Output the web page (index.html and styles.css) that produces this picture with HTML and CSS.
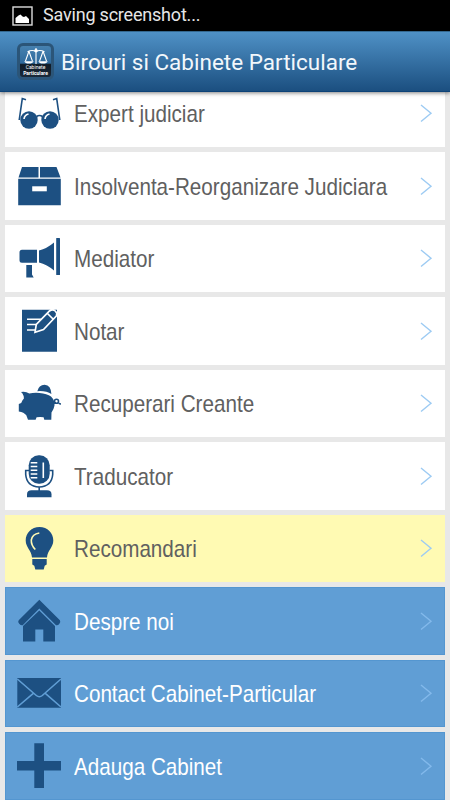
FILE: index.html
```html
<!DOCTYPE html>
<html lang="ro">
	<head>
		<meta charset="utf-8">
		<title>Birouri si Cabinete Particulare</title>
		<link rel="stylesheet" href="styles.css">
	</head>
	<body>
		<div class="status">
			<svg class="status-icon" viewBox="0 0 21 20">
				<rect x="1" y="1" width="19" height="18" fill="none" stroke="#ddd" stroke-width="1.4"/>
				<path d="M3.500 17v-5l3-2.500 2-1 2 2 1.500.5 2-1 3 3v4z" fill="#fff"/>
			</svg>
			<span class="status-text">Saving screenshot...</span>
		</div>
		<header class="bar">
			<div class="logo">
				<svg class="scales" viewBox="0 0 26 17" fill="none" stroke="#fff" stroke-width="1.200">
					<path d="M13 0v17M4 4q4.500-2.500 9-.5 4.500-2 9 .5M5.500 3.500L1.800 14M5.500 3.500L9.200 14M20.500 3.500L16.800 14M20.500 3.500L24.200 14"/>
					<path d="M.5 14h10q-1 2.500-5 2.500t-5-2.500zM15.500 14h10q-1 2.500-5 2.500t-5-2.500z" fill="#fff" stroke="none"/>
					<circle cx="13" cy="3" r="1.900" fill="#fff" stroke="none"/>
				</svg>
				<div class="logo-text">Cabinete<br><b>Particulare</b></div>
			</div>
			<h1 class="title">Birouri si Cabinete Particulare</h1>
		</header>
		<ul class="menu">
			<li class="item">
				<svg class="icon" viewBox="0 0 48 48">
					<circle cx="14" cy="31" r="8.700"/><circle cx="35" cy="31" r="8.700"/>
					<path class="line" d="M11 10.800L7.300 9.600 4.200 31M38 10.800l3.700-1.200L44.800 31M21.500 27.500q3-2 6 0"/>
					<path class="cut" d="M9 30q.5-4 4.500-5M30 30q.5-4 4.500-5"/>
				</svg>
				<span class="label">Expert judiciar</span>
				<svg class="arrow" viewBox="0 0 14 20"><path d="M2 2l10 8.200L2 18.500"/></svg>
			</li>
			<li class="item">
				<svg class="icon" viewBox="0 0 48 48">
					<path d="M7 5h16.500v10.600h-20zM25 5h16.500l4 10.600H25zM3.200 16.800h42.600v26.500H3.200z"/>
					<rect class="hole" x="17.200" y="24.300" width="14.600" height="5"/>
				</svg>
				<span class="label">Insolventa-Reorganizare Judiciara</span>
				<svg class="arrow" viewBox="0 0 14 20"><path d="M2 2l10 8.200L2 18.500"/></svg>
			</li>
			<li class="item">
				<svg class="icon" viewBox="0 0 48 48">
					<path d="M7 15.800h15v13H7q-2.500 0-2.500-2.500v-8q0-2.500 2.500-2.500zM24 16.500q8-2 15-8v28q-7-6-15-8zM11.300 31h5.700v9.500l1.700 3h-7.400z"/>
					<rect x="41.200" y="4" width="3.800" height="37" rx=".5"/>
				</svg>
				<span class="label">Mediator</span>
				<svg class="arrow" viewBox="0 0 14 20"><path d="M2 2l10 8.200L2 18.500"/></svg>
			</li>
			<li class="item">
				<svg class="icon" viewBox="0 0 48 48">
					<path d="M7 2.700h35v42H7z"/>
					<path class="cut" d="M12 12.300h14M12 17.500h9M12 23h8"/>
					<path class="pencil" d="M20 25.300l1.300-8L34.500 4q3-2.500 5.700 0t1.100 5L28.500 22.500zM32.500 6.500l6 6"/>
				</svg>
				<span class="label">Notar</span>
				<svg class="arrow" viewBox="0 0 14 20"><path d="M2 2l10 8.200L2 18.500"/></svg>
			</li>
			<li class="item">
				<svg class="icon" viewBox="0 0 48 48">
					<path d="M6 13q4.500-1 8.300 1.500 5-1 10.200-.5 7.500.5 11.500 3.500 4 4 3.500 9-.7 4-3 7l-.2 7.300h-7l-.7-2.500q-3.500-.6-7 0l-1 2.500H13l-1.700-4.500Q9 33.200 3.800 32.500V25l2.400-1q1-3 2.700-4.500Q9 15.500 6 13z"/>
					<path d="M22.300 12.200q1.500-6.500 7.300-6.500 6.500.5 6.800 9.400-5-3.500-14.100-2.900z"/>
					<path class="line" d="M38.500 24.500q1.500 0 2-1.500m3 1.200q1.200.8 2.500.8"/>
					<circle class="line" cx="41.500" cy="22.300" r="2"/>
				</svg>
				<span class="label">Recuperari Creante</span>
				<svg class="arrow" viewBox="0 0 14 20"><path d="M2 2l10 8.200L2 18.500"/></svg>
			</li>
			<li class="item">
				<svg class="icon" viewBox="0 0 48 48">
					<rect x="13.700" y="3.200" width="21" height="28.500" rx="10"/>
					<path class="line" d="M14 18.500h-3.300v4q1 12 13.500 12.500 12.500-.5 13.500-12.500v-4h-3.300M24.200 35v4"/>
					<path d="M12 45.300v-3q0-4 4.500-4h15.500q4.500 0 4.500 4v3z"/>
					<path class="cut" d="M15.700 10.800h6.600M15.700 14.500h6.600M15.700 18.200h6.600M15.700 22h6.600M15.700 25.800h6.600M28.300 10.500V26"/>
				</svg>
				<span class="label">Traducator</span>
				<svg class="arrow" viewBox="0 0 14 20"><path d="M2 2l10 8.200L2 18.500"/></svg>
			</li>
			<li class="item yellow">
				<svg class="icon" viewBox="0 0 48 48">
					<path d="M24.500 3.100c8 0 13.800 6 13.800 13.500 0 7-5.800 10-6.300 16.800H17c-.5-6.800-6.300-9.800-6.300-16.800C10.700 9 16.500 3.100 24.500 3.100zM17.300 35h14.400v5.500l-2 1.200-1 3.700h-8.400l-1-3.700-2-1.200z"/>
					<path class="cut" d="M24.300 9q-7 1-8 7-.3 5 4 9.500"/>
				</svg>
				<span class="label">Recomandari</span>
				<svg class="arrow" viewBox="0 0 14 20"><path d="M2 2l10 8.200L2 18.500"/></svg>
			</li>
			<li class="item blue">
				<svg class="icon" viewBox="0 0 48 48">
					<path d="M24.300 2.800l20.600 20.400q1 1.500-.5 3.500t-3.400 1.500L24.300 11.500 7.700 28.200Q6 28.700 4.200 26.700t-.5-3.500z"/>
					<path d="M24.300 13.500L40 29v15.500H28.300v-12h-8v12H8V29z"/>
				</svg>
				<span class="label">Despre noi</span>
				<svg class="arrow" viewBox="0 0 14 20"><path d="M2 2l10 8.200L2 18.500"/></svg>
			</li>
			<li class="item blue">
				<svg class="icon" viewBox="0 0 48 48">
					<path d="M2.300 9H46v29.700H2.300z"/>
					<path class="cut" d="M2.300 10l19 16.500q3 2.500 6 0L46 10M2.300 38l16-13.700M46 38L30.300 24.300"/>
				</svg>
				<span class="label">Contact Cabinet-Particular</span>
				<svg class="arrow" viewBox="0 0 14 20"><path d="M2 2l10 8.200L2 18.500"/></svg>
			</li>
			<li class="item blue">
				<svg class="icon" viewBox="0 0 48 48">
					<path d="M19.300 1.300H29v17.600h17v9.700H29v17.300h-9.700V28.600H2v-9.700h17.300z"/>
				</svg>
				<span class="label">Adauga Cabinet</span>
				<svg class="arrow" viewBox="0 0 14 20"><path d="M2 2l10 8.200L2 18.500"/></svg>
			</li>
		</ul>
	</body>
</html>
```

FILE: styles.css
```css
body {
	margin: 0;
	height: 800px;
	overflow: hidden;
	background: #e8e8e8;
	font-family: Roboto, sans-serif;
}

.status {
	display: flex;
	align-items: center;
	height: 31px;
	padding-left: 12px;
	background: #000;
	position: relative;
	z-index: 2;
}

.status-icon {
	width: 21px;
	height: 20px;
}

.status-text {
	margin-left: 10px;
	color: #e6e6e6;
	font-size: 18px;
	letter-spacing: -0.2px;
	line-height: 28px;
	padding-bottom: 2px;
}

.bar {
	display: flex;
	align-items: center;
	box-sizing: border-box;
	height: 61px;
	padding-left: 17px;
	background: linear-gradient(#4f91c6, #1b4f80);
	border-top: 1px solid #34688f;
	border-bottom: 1px solid #0d4378;
	box-shadow: 0 1px 4px rgba(0, 0, 0, 0.5);
	position: relative;
	z-index: 2;
}

.logo {
	box-sizing: border-box;
	width: 37px;
	height: 37px;
	padding-top: 2px;
	border-radius: 6px;
	border: 3px solid #2b5578;
	background: linear-gradient(#4681b0 0, #2f6a9c 55%, #101b26 60%, #1a2a3a 100%);
	overflow: hidden;
}

.scales {
	display: block;
	width: 26px;
	height: 16px;
	margin: 0 auto;
}

.logo-text {
	margin: 0 -3px;
	color: #fff;
	font-size: 5px;
	line-height: 6px;
	text-align: center;
	white-space: nowrap;
}

.title {
	margin: 0 0 0 7px;
	padding-top: 1px;
	color: #f2f7fb;
	font-size: 22.5px;
	font-weight: normal;
	white-space: nowrap;
}

/* the list is scrolled, its first row slides under the bar */
.menu {
	display: grid;
	gap: 5px;
	margin: -12.5px 5px 0;
	padding: 0;
	list-style: none;
}

.item {
	display: flex;
	align-items: center;
	min-width: 0;
	height: 67.5px;
	padding: 0 12px 0 10px;
	background: #fff;
	color: #606060;
}

.icon {
	flex: none;
	width: 48px;
	height: 48px;
	fill: #1d5082;
}

.line {
	fill: none;
	stroke: #1d5082;
	stroke-width: 1.6;
}

.cut {
	fill: none;
	stroke: #fff;
	stroke-width: 1.6;
}

.hole {
	fill: #fff;
}

.pencil {
	stroke: #fff;
	stroke-width: 1.7;
}

/* condensed lettering */
.label {
	flex: 1;
	min-width: 0;
	margin-left: 11px;
	padding-top: 2px;
	font-family: "Liberation Sans", sans-serif;
	font-size: 24px;
	white-space: nowrap;
	transform: scaleX(0.86);
	transform-origin: left;
}

.arrow {
	flex: none;
	width: 14px;
	height: 20px;
	fill: none;
	stroke: #9dcbf3;
	stroke-width: 1.4;
}

.yellow {
	background: #fffab3;
}

.yellow .cut {
	stroke: #fffab3;
}

.blue {
	background: #609ed5;
	box-shadow: inset 0 0 0 1px #5496d0;
	color: #fff;
}

.blue .cut {
	stroke: #609ed5;
}

.blue .arrow {
	stroke: #83b9eb;
}
```
